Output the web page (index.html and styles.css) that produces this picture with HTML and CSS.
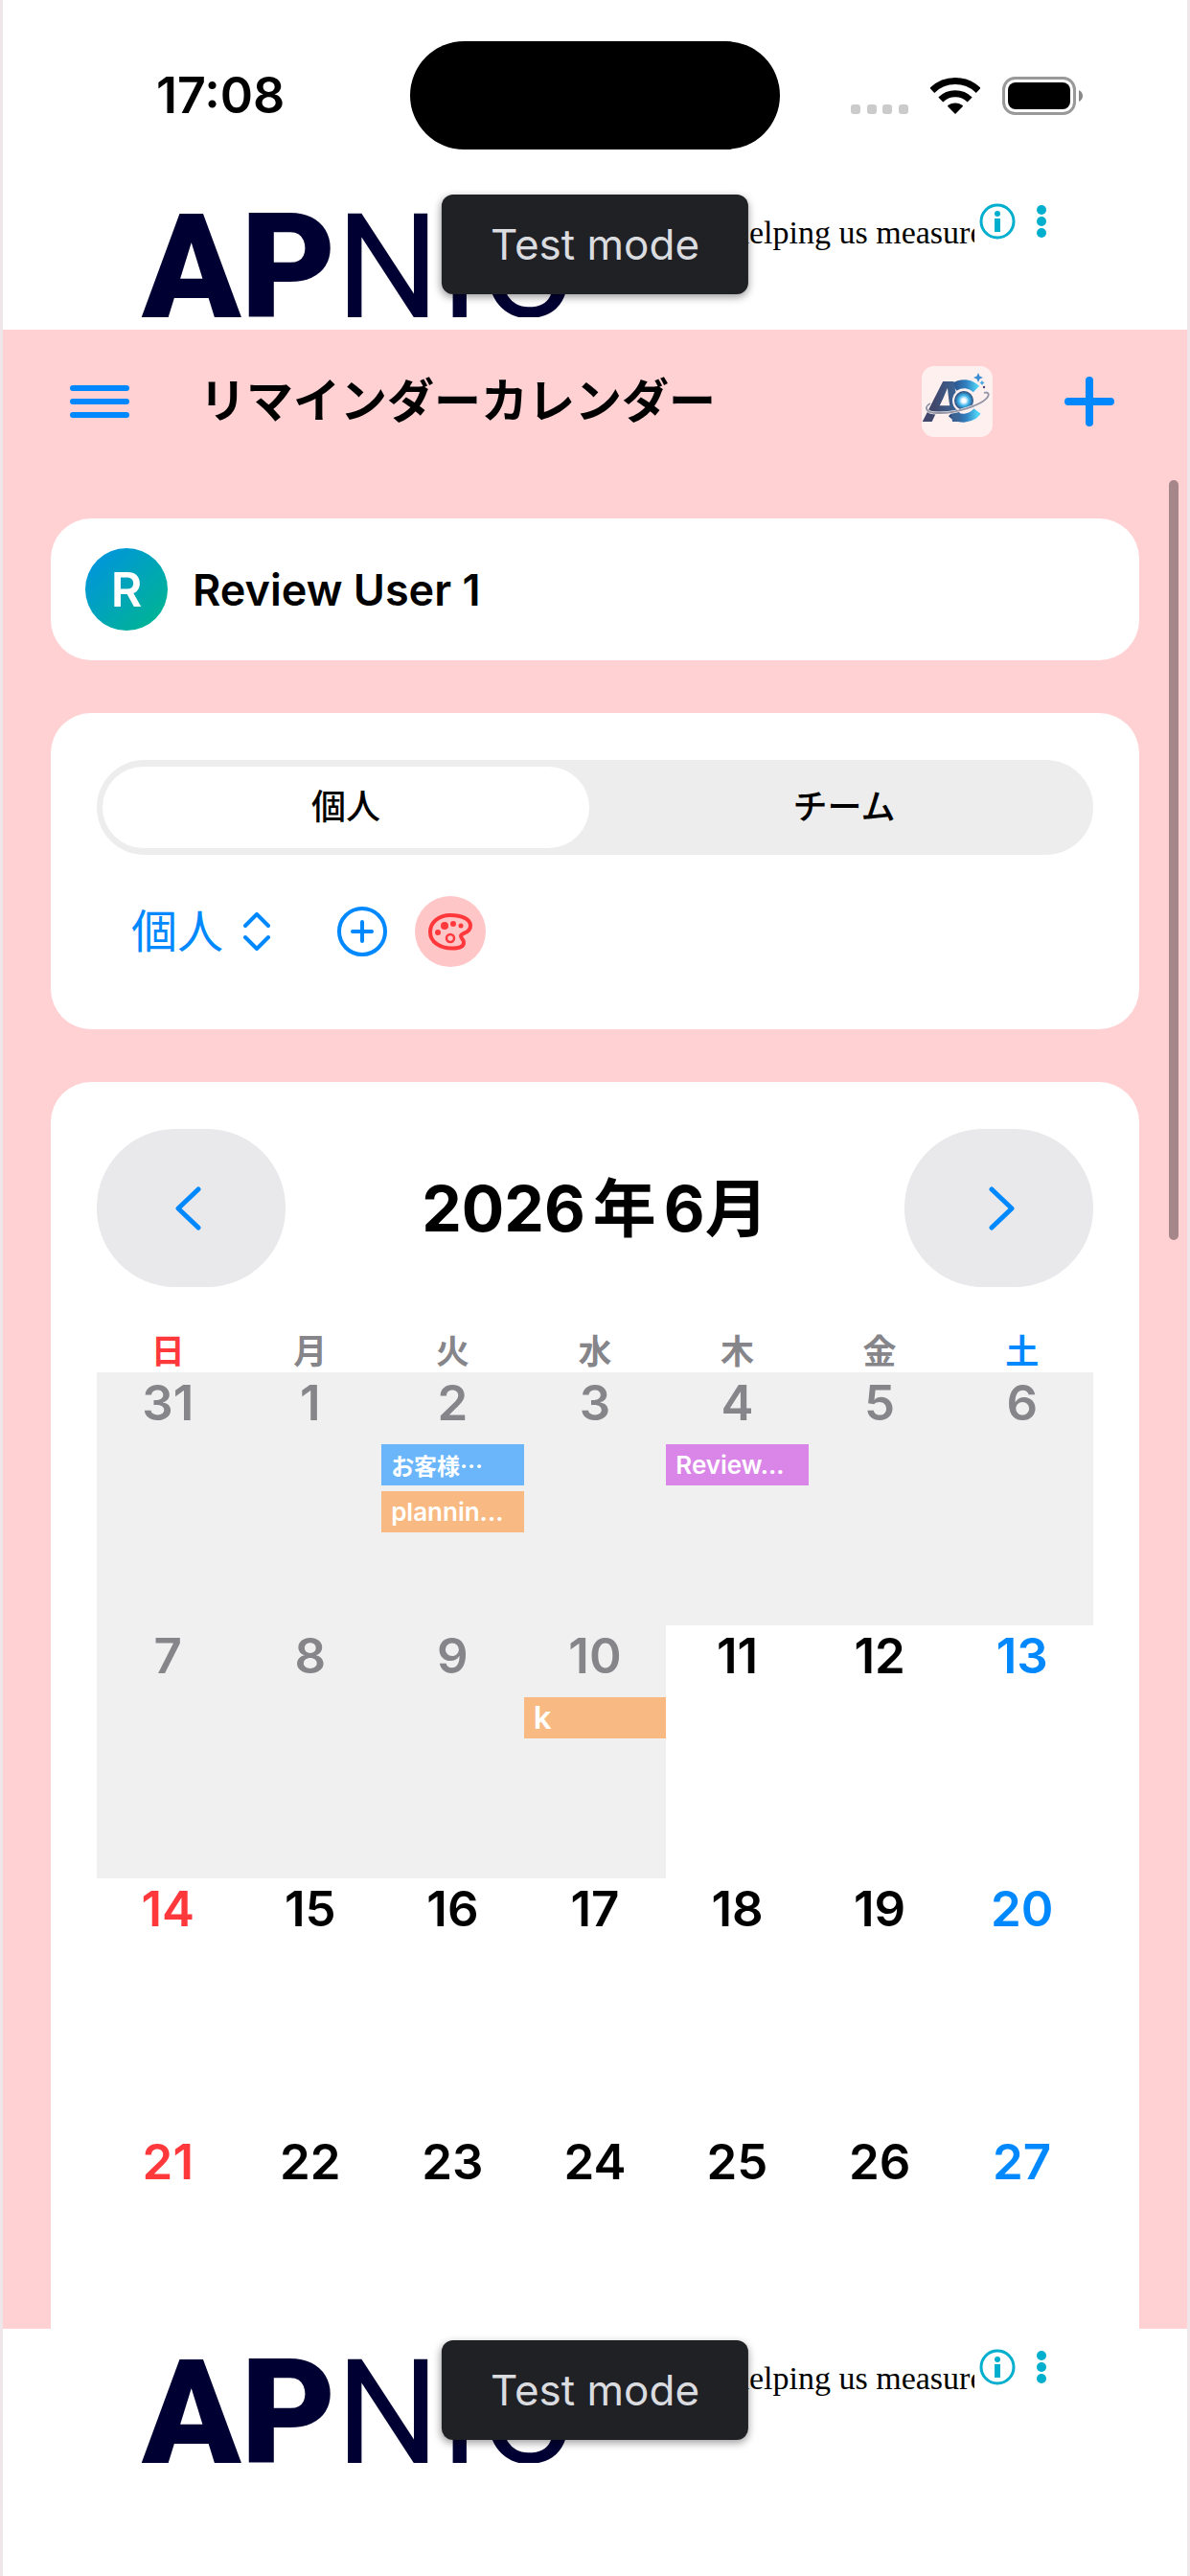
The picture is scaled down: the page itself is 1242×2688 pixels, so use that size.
FILE: index.html
```html
<!DOCTYPE html>
<html lang="ja">
<head>
  <meta charset="UTF-8" />
  <meta name="viewport" content="width=device-width, initial-scale=1.0" />
  <title>リマインダーカレンダー</title>
  <link rel="stylesheet" href="styles.css">
</head>
<body>

<!-- Status bar -->
<div class="status-bar">
  <span class="time">17:08</span>
  <div class="island"></div>
  <div class="status-icons">
    <svg width="60" height="40" viewBox="0 0 60 40" fill="#cbcbcb">
      <rect x="0" y="29" width="10" height="10" rx="3" />
      <rect x="17" y="29" width="10" height="10" rx="3" />
      <rect x="33" y="29" width="10" height="10" rx="3" />
      <rect x="50" y="29" width="10" height="10" rx="3" />
    </svg>
    <svg width="52" height="40" viewBox="0 0 52 40" fill="none" stroke="#000" stroke-width="7">
      <path d="M1.8 14.4A34.5 34.5 0 0 1 50.2 14.4" />
      <path d="M10.8 24A21.5 21.5 0 0 1 41.2 24" />
      <path d="M26 39L17.8 30.8A12 12 0 0 1 34.2 30.8Z" fill="#000" stroke="none" />
    </svg>
    <svg width="84" height="40" viewBox="0 0 84 40">
      <rect x="1.5" y="1.5" width="74" height="37" rx="12" fill="none" stroke="#999" stroke-width="3" />
      <rect x="6" y="6" width="65" height="28" rx="8" />
      <path d="M80 14Q84 16 84 20T80 26Z" fill="#888" />
    </svg>
  </div>
</div>

<!-- Top ad -->
<aside class="ad">
  <div class="ad-content">
    <div class="ad-logo"><b>AP</b>NIC</div>
    <p class="ad-text">Thank you for helping us measure</p>
    <svg class="ad-icons" width="76" height="38" viewBox="0 0 76 38" fill="#00aecd">
      <circle cx="19" cy="19" r="17" fill="none" stroke="#00aecd" stroke-width="3" />
      <circle cx="19" cy="11" r="3" />
      <rect x="16" y="16" width="6" height="14" />
      <circle cx="65" cy="7" r="5" />
      <circle cx="65" cy="19" r="5" />
      <circle cx="65" cy="31" r="5" />
    </svg>
  </div>
  <span class="badge">Test mode</span>
</aside>

<main class="app">
  <header class="header">
    <button class="icon-btn" type="button" aria-label="メニュー">
      <svg width="62" height="36" viewBox="0 0 62 36" stroke="#0088ff" stroke-width="6" stroke-linecap="round">
        <path d="M3 4H59M3 18H59M3 32H59" />
      </svg>
    </button>
    <h1>リマインダーカレンダー</h1>
    <a class="app-logo" href="#" aria-label="AC">
      <svg width="74" height="74" viewBox="0 0 74 74">
        <defs>
          <linearGradient id="gradA" x1="0" x2="1">
            <stop offset="0.3" stop-color="#41476b" />
            <stop offset="1" stop-color="#3671a8" />
          </linearGradient>
          <linearGradient id="gradC" x1="0" x2="1">
            <stop offset="0" stop-color="#2b4a82" />
            <stop offset="0.6" stop-color="#3283c3" />
            <stop offset="1" stop-color="#4fd3f5" />
          </linearGradient>
          <radialGradient id="orb">
            <stop offset="0.2" stop-color="#fff" />
            <stop offset="0.55" stop-color="#3fb5ec" />
            <stop offset="1" stop-color="#2d4678" />
          </radialGradient>
        </defs>
        <rect width="74" height="74" rx="13" fill="#fff0f0" />
        <path d="M34 22A18 18 0 0 1 57 24M58 47A18 18 0 0 1 31 49" fill="none" stroke="url(#gradC)" stroke-width="9" />
        <text class="logo-a" x="2" y="58" fill="url(#gradA)">A</text>
        <circle cx="44" cy="36" r="12" fill="#fff0f0" />
        <circle cx="44" cy="36" r="10" fill="url(#orb)" />
        <path d="M9 39C2 43 4 49 16 49C36 50 64 40 69 32C71 28 68 27 65 28" fill="none" stroke="#fff" stroke-width="3" />
        <path d="M9 39C2 43 4 49 16 49C36 50 64 40 69 32C71 28 68 27 65 28" fill="none" stroke="#9997a5" stroke-width="2" />
        <path d="M59 7L60.500 10.500L64 12L60.500 13.500L59 17L57.500 13.500L54 12L57.500 10.500Z" fill="#3a8bd0" />
        <path d="M63 15L64 16.500L65.500 17.500L64 18.500L63 20L62 18.500L60.500 17.500L62 16.500Z" fill="#45a8de" />
        <circle cx="65" cy="22" r="1.200" fill="#41476b" />
      </svg>
    </a>
    <button class="icon-btn" type="button" aria-label="追加">
      <svg width="52" height="52" viewBox="0 0 52 52" stroke="#0088ff" stroke-width="8" stroke-linecap="round">
        <path d="M26 4V48M4 26H48" />
      </svg>
    </button>
  </header>

  <!-- User -->
  <section class="card user-card">
    <span class="avatar">R</span>
    <span class="user-name">Review User 1</span>
  </section>

  <!-- Calendar selector -->
  <section class="card">
    <div class="segmented">
      <input type="radio" name="mode" id="modePersonal" checked />
      <label for="modePersonal">個人</label>
      <input type="radio" name="mode" id="modeTeam" />
      <label for="modeTeam">チーム</label>
    </div>
    <div class="toolbar">
      <label class="picker">
        <select aria-label="カレンダー">
          <option>個人</option>
        </select>
        <svg width="28" height="40" viewBox="0 0 28 40" fill="none" stroke="#0088ff" stroke-width="4" stroke-linecap="round" stroke-linejoin="round">
          <path d="M2 14L14 2L26 14M2 26L14 38L26 26" />
        </svg>
      </label>
      <button class="icon-btn" type="button" aria-label="カレンダーを追加">
        <svg width="54" height="54" viewBox="0 0 54 54" fill="none" stroke="#0088ff" stroke-width="4" stroke-linecap="round">
          <circle cx="27" cy="27" r="24" />
          <path d="M27 17V37M17 27H37" />
        </svg>
      </button>
      <button class="icon-btn palette" type="button" aria-label="テーマカラー">
        <svg width="46" height="40" viewBox="0 0 46 40" fill="#ff383c">
          <path d="M23 3C10 3 2 11 2 20.500C2 31 12 37.500 25 37.500C33 37.500 37 35 37 31.500C37 28 33.500 27 34 24.500C35 21 44 22 44 14C44 7 35 3 23 3Z" fill="none" stroke="#ff383c" stroke-width="4" />
          <circle cx="10" cy="21" r="3" />
          <circle cx="17" cy="14" r="4" />
          <circle cx="26" cy="12" r="3" />
          <circle cx="34" cy="14" r="2.500" />
          <circle cx="23" cy="27" r="4" fill="none" stroke="#ff383c" stroke-width="2.500" />
        </svg>
      </button>
    </div>
  </section>

  <!-- Calendar -->
  <section class="card">
    <div class="month-nav">
      <button class="nav-btn" type="button" aria-label="前の月">
        <svg width="34" height="56" viewBox="0 0 34 56" fill="none" stroke="#0088ff" stroke-width="5" stroke-linecap="round" stroke-linejoin="round">
          <path d="M24 8L3 28L24 48" />
        </svg>
      </button>
      <h2>2026<span class="year-mark">年</span>6月</h2>
      <button class="nav-btn" type="button" aria-label="次の月">
        <svg width="34" height="56" viewBox="0 0 34 56" fill="none" stroke="#0088ff" stroke-width="5" stroke-linecap="round" stroke-linejoin="round">
          <path d="M10 8L31 28L10 48" />
        </svg>
      </button>
    </div>
    <table class="calendar">
      <thead>
        <tr>
          <th>日</th><th>月</th><th>火</th><th>水</th><th>木</th><th>金</th><th>土</th>
        </tr>
      </thead>
      <tbody>
        <tr>
          <td class="past">31</td>
          <td class="past">1</td>
          <td class="past">2
            <div class="event blue ja">お客様…</div>
            <div class="event orange">plannin...</div>
          </td>
          <td class="past">3</td>
          <td class="past">4
            <div class="event purple">Review...</div>
          </td>
          <td class="past">5</td>
          <td class="past">6</td>
        </tr>
        <tr>
          <td class="past">7</td>
          <td class="past">8</td>
          <td class="past">9</td>
          <td class="past">10
            <div class="event orange large">k</div>
          </td>
          <td>11</td>
          <td>12</td>
          <td>13</td>
        </tr>
        <tr>
          <td>14</td><td>15</td><td>16</td><td>17</td><td>18</td><td>19</td><td>20</td>
        </tr>
        <tr>
          <td>21</td><td>22</td><td>23</td><td>24</td><td>25</td><td>26</td><td>27</td>
        </tr>
      </tbody>
    </table>
  </section>
  <div class="scroll-thumb"></div>
</main>

<!-- Bottom ad -->
<aside class="ad">
  <div class="ad-content">
    <div class="ad-logo"><b>AP</b>NIC</div>
    <p class="ad-text">Thank you for helping us measure</p>
    <svg class="ad-icons" width="76" height="38" viewBox="0 0 76 38" fill="#00aecd">
      <circle cx="19" cy="19" r="17" fill="none" stroke="#00aecd" stroke-width="3" />
      <circle cx="19" cy="11" r="3" />
      <rect x="16" y="16" width="6" height="14" />
      <circle cx="65" cy="7" r="5" />
      <circle cx="65" cy="19" r="5" />
      <circle cx="65" cy="31" r="5" />
    </svg>
  </div>
  <span class="badge">Test mode</span>
</aside>

</body>
</html>
```
FILE: styles.css
```css
*, *::before, *::after { box-sizing: border-box; margin: 0; padding: 0; }

:root {
  --pink:   #ffd1d3;
  --blue:   #0088ff;
  --red:    #ff383c;
  --gray:   #85858a;
  --past:   #f0f0f0;
  --navy:   #000033;
}

body {
  font-family: Inter, "Noto Sans CJK JP", sans-serif;
  background: #fff;
  color: #000;
  height: 100vh;
  display: flex;
  flex-direction: column;
  border: solid #efe6e9;
  border-width: 0 3px;
  padding-bottom: 105px;
  overflow: hidden;
}

button, select {
  font: inherit;
  background: none;
  border: none;
  cursor: pointer;
}

svg { display: block; }

/* Status bar */
.status-bar {
  display: grid;
  grid-template-columns: 1fr 386px 1fr;
  align-items: center;
  padding: 43px 109px 35px;
  flex: none;
}

.time {
  padding-left: 51px;
  font-size: 52px;
  font-weight: 600;
  line-height: 60px;
}

.island {
  height: 113px;
  border-radius: 57px;
  background: #000;
}

.status-icons {
  display: flex;
  justify-content: flex-end;
  gap: 23px;
}

/* Ads */
.ad {
  position: relative;
  height: 153px;
  flex: none;
}

.ad-content {
  display: flex;
  height: 140px;
  padding-left: 145px;
  overflow: hidden;
}

.ad-logo {
  font-family: Roboto, sans-serif;
  font-size: 152px;
  line-height: 176px;
  color: var(--navy);
  width: 414px;
  white-space: nowrap;
}

.ad-logo b { font-weight: 900; }

.ad-text {
  font-family: "Liberation Serif", serif;
  font-size: 34px;
  line-height: 40px;
  padding-top: 32px;
  width: 455px;
  white-space: nowrap;
  overflow: hidden;
}

.ad-icons {
  margin-top: 21px;
  margin-left: 5px;
}

.badge {
  position: absolute;
  top: 12px;
  left: 50%;
  transform: translateX(-50%);
  padding: 0 51px;
  border-radius: 12px;
  background: #202125;
  color: #dadce0;
  font-size: 44px;
  line-height: 104px;
  white-space: nowrap;
  box-shadow: 0 3px 8px rgba(0, 0, 0, .4);
}

/* App */
.app {
  position: relative;
  flex: 1;
  min-height: 0;
  overflow: hidden;
  display: flex;
  flex-direction: column;
  gap: 55px;
  padding: 0 50px;
  background: var(--pink);
}

.header {
  display: flex;
  align-items: center;
  height: 142px;
  padding: 7px 26px 0 20px;
  flex: none;
}

.header h1 {
  flex: 1;
  margin-left: 73px;
  font-size: 49px;
  font-weight: 700;
  line-height: 60px;
}

.app-logo { margin-right: 75px; }

.logo-a {
  font-size: 58px;
  font-weight: 700;
  font-style: italic;
}

.card {
  background: #fff;
  border-radius: 42px;
  padding: 49px 48px;
  flex: none;
}

.user-card {
  display: flex;
  align-items: center;
  gap: 26px;
  padding: 31px 36px;
}

.avatar {
  width: 86px;
  height: 86px;
  border-radius: 50%;
  background: linear-gradient(135deg, #0091e6, #00b88a);
  color: #fff;
  font-size: 50px;
  font-weight: 600;
  line-height: 86px;
  text-align: center;
}

.user-name {
  font-size: 45px;
  font-weight: 600;
}

/* Segmented control */
.segmented {
  display: flex;
  gap: 12px;
  padding: 7px 6px;
  border-radius: 50px;
  background: #ededed;
}

.segmented input {
  position: absolute;
  opacity: 0;
}

.segmented label {
  flex: 1;
  border-radius: 43px;
  font-size: 36px;
  font-weight: 500;
  line-height: 85px;
  text-align: center;
  cursor: pointer;
}

.segmented input:checked + label { background: #fff; }

.toolbar {
  display: flex;
  align-items: center;
  height: 120px;
  margin-top: 20px;
  margin-bottom: -7px;
  padding: 0 36px;
}

.picker {
  display: flex;
  align-items: center;
  gap: 20px;
  margin-right: 69px;
}

.picker select {
  appearance: none;
  color: var(--blue);
  font-size: 48px;
  line-height: 60px;
}

.palette {
  display: grid;
  place-items: center;
  width: 74px;
  height: 74px;
  margin-left: 28px;
  border-radius: 50%;
  background: #ffc6c8;
}

/* Calendar */
.month-nav {
  display: flex;
  justify-content: space-between;
  align-items: center;
}

.month-nav h2 {
  font-size: 66px;
  font-weight: 700;
  line-height: 80px;
}

.year-mark { margin: 0 8px; }

.nav-btn {
  display: grid;
  place-items: center;
  width: 197px;
  height: 165px;
  border-radius: 82px;
  background: #e9e9eb;
}

.calendar {
  width: 100%;
  margin-top: 45px;
  table-layout: fixed;
  border-collapse: collapse;
}

.calendar th {
  height: 44px;
  color: var(--gray);
  font-size: 35px;
  font-weight: 600;
  line-height: 44px;
}

.calendar td {
  height: 264px;
  font-size: 51px;
  font-weight: 600;
  line-height: 64px;
  text-align: center;
  vertical-align: top;
}

.calendar th:first-child, .calendar td:first-child { color: var(--red); }
.calendar th:last-child, .calendar td:last-child { color: var(--blue); }

.calendar td.past {
  background: var(--past);
  color: var(--gray);
}

.event {
  height: 43px;
  margin-top: 6px;
  padding-left: 10px;
  color: #fff;
  font-size: 26px;
  font-weight: 600;
  line-height: 43px;
  text-align: left;
  white-space: nowrap;
  overflow: hidden;
}

.event:first-child { margin-top: 11px; }
.event.ja { font-family: "Noto Sans CJK JP", sans-serif; font-size: 24px; }
.event.large { font-size: 33px; }

.blue { background: #6bb6fb; }
.orange { background: #f9b983; }
.purple { background: #da86e8; }

/* Scroll indicator over the page */
.scroll-thumb {
  position: absolute;
  top: 157px;
  right: 9px;
  width: 10px;
  height: 793px;
  border-radius: 5px;
  background: #a68789;
}
```
